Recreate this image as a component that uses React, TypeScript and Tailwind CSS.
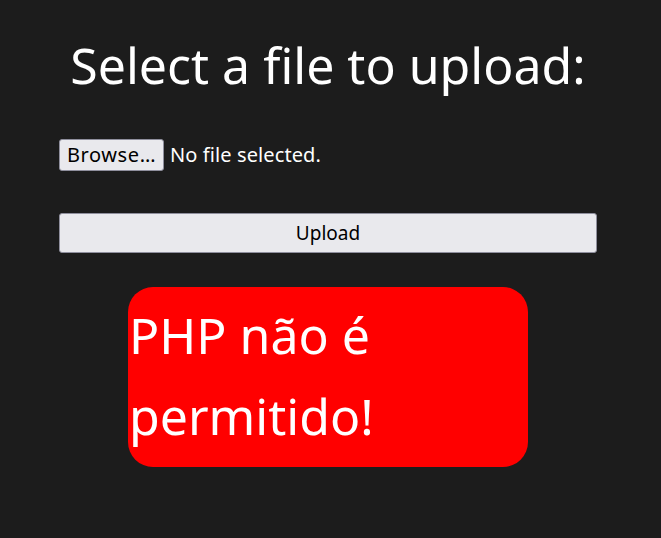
export default function App() {
  return (
    <div
      className="min-h-[538px] bg-[#1c1c1c] text-white"
      style={{ fontFamily: '"Noto Sans", "Open Sans", sans-serif' }}
    >
      <div className="ml-[59px] flex w-[538px] flex-col pt-[28px]">
        <h1 className="h-[74px] text-center text-[50px] leading-[74px]">
          Select a file to upload:
        </h1>
        <div className="mt-[37px] flex h-[32px] items-center gap-[6px]">
          <button className="h-[32px] w-[105px] rounded-[3px] border border-[#8f8f9d] bg-[#e9e9ed] text-[20px] tracking-[0.6px] text-black">
            Browse…
          </button>
          <span className="text-[20px] tracking-[0.1px]">No file selected.</span>
        </div>
        <button className="mt-[42px] h-[40px] w-full rounded-[3px] border border-[#8f8f9d] bg-[#e9e9ed] text-[19px] text-black">
          Upload
        </button>
        <div className="mx-auto mt-[34px] h-[180px] w-[400px] rounded-[25px] bg-[#ff0000] pl-[1px] pt-[8px] text-[50px] leading-[81px]">
          PHP não é permitido!
        </div>
      </div>
    </div>
  );
}
